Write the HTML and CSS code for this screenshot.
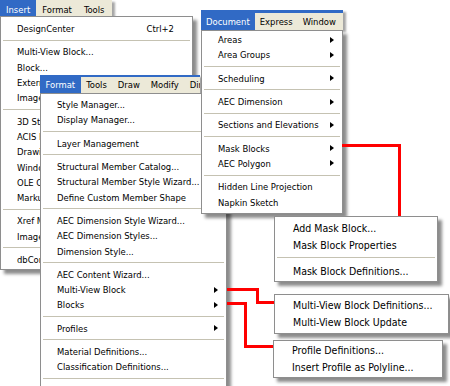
FILE: index.html
```html
<!DOCTYPE html>
<html>
  <head>
    <title>Menus</title>
    <link rel="stylesheet" href="styles.css">
  </head>
  <body>
    <div class="canvas">
      <!-- Insert menu -->
      <div class="menu insert">
        <div class="bar">
          <span class="top on">Insert</span>
          <span class="top">Format</span>
          <span class="top">Tools</span>
        </div>
        <div class="drop">
          <div class="item">DesignCenter<span class="key">Ctrl+2</span></div>
          <div class="sep"></div>
          <div class="item">Multi-View Block...</div>
          <div class="item">Block...</div>
          <div class="item">External Reference...</div>
          <div class="item">Image...</div>
          <div class="sep"></div>
          <div class="item">3D Studio...</div>
          <div class="item">ACIS File...</div>
          <div class="item">Drawing Exchange Binary...</div>
          <div class="item">Windows Metafile...</div>
          <div class="item">OLE Object...</div>
          <div class="item">Markup...</div>
          <div class="sep"></div>
          <div class="item">Xref Manager...</div>
          <div class="item">Image Manager...</div>
          <div class="sep"></div>
          <div class="item">dbConnect</div>
        </div>
      </div>

      <!-- Format menu -->
      <div class="menu format">
        <div class="bar">
          <span class="top on">Format</span>
          <span class="top">Tools</span>
          <span class="top">Draw</span>
          <span class="top">Modify</span>
          <span class="top">Dimension</span>
        </div>
        <div class="drop">
          <div class="item">Style Manager...</div>
          <div class="item">Display Manager...</div>
          <div class="sep"></div>
          <div class="item">Layer Management</div>
          <div class="sep"></div>
          <div class="item">Structural Member Catalog...</div>
          <div class="item">Structural Member Style Wizard...</div>
          <div class="item">Define Custom Member Shape</div>
          <div class="sep"></div>
          <div class="item">AEC Dimension Style Wizard...</div>
          <div class="item">AEC Dimension Styles...</div>
          <div class="item">Dimension Style...</div>
          <div class="sep"></div>
          <div class="item">AEC Content Wizard...</div>
          <div class="item">Multi-View Block<span class="arrow"></span></div>
          <div class="item">Blocks<span class="arrow"></span></div>
          <div class="sep"></div>
          <div class="item">Profiles<span class="arrow"></span></div>
          <div class="sep"></div>
          <div class="item">Material Definitions...</div>
          <div class="item">Classification Definitions...</div>
          <div class="sep"></div>
          <div class="item">Drawing Setup...</div>
        </div>
      </div>

      <!-- Document menu -->
      <div class="menu document">
        <div class="bar">
          <span class="top on">Document</span>
          <span class="top">Express</span>
          <span class="top">Window</span>
        </div>
        <div class="drop">
          <div class="item">Areas<span class="arrow"></span></div>
          <div class="item">Area Groups<span class="arrow"></span></div>
          <div class="sep"></div>
          <div class="item">Scheduling<span class="arrow"></span></div>
          <div class="sep"></div>
          <div class="item">AEC Dimension<span class="arrow"></span></div>
          <div class="sep"></div>
          <div class="item">Sections and Elevations<span class="arrow"></span></div>
          <div class="sep"></div>
          <div class="item">Mask Blocks<span class="arrow"></span></div>
          <div class="item">AEC Polygon<span class="arrow"></span></div>
          <div class="sep"></div>
          <div class="item">Hidden Line Projection</div>
          <div class="item">Napkin Sketch</div>
        </div>
      </div>

      <!-- submenus -->
      <div class="sub mask">
        <div class="item">Add Mask Block...</div>
        <div class="item">Mask Block Properties</div>
        <div class="sep"></div>
        <div class="item">Mask Block Definitions...</div>
      </div>
      <div class="sub mvb">
        <div class="item">Multi-View Block Definitions...</div>
        <div class="item">Multi-View Block Update</div>
      </div>
      <div class="sub profile">
        <div class="item">Profile Definitions...</div>
        <div class="item">Insert Profile as Polyline...</div>
      </div>

      <svg class="links" width="450" height="386" viewBox="0 0 450 386">
        <path d="M342 145.5 H399.5 V216" />
        <path d="M227 289.5 H257.5 V302.5 H274" />
        <path d="M227 303.5 H245.5 V346.5 H273" />
      </svg>
    </div>
  </body>
</html>
```

FILE: styles.css
```css
body {
  margin: 0;
  background: #fff;
  font-family: "DejaVu Sans Condensed", "Liberation Sans", sans-serif;
  font-size: 9.4px;
  color: #000;
}
.canvas {
  position: relative;
  width: 450px;
  height: 386px;
  overflow: hidden;
}

/* each menu is a cut-out screenshot placed on the canvas */
.menu {
  position: absolute;
  display: flex;
  flex-direction: column;
  align-items: flex-start;
}
.insert {
  left: 0;
  top: 0;
  z-index: 1;
}
.format {
  left: 40px;
  top: 75px;
  z-index: 2;
}
.document {
  left: 201px;
  top: 10px;
  z-index: 3;
}

.bar {
  display: flex;
  box-sizing: border-box;
  background: #ece9d8;
  white-space: nowrap;
  overflow: hidden;
  box-shadow: 3px 2px 2px rgba(0, 0, 0, 0.35);
}
.top {
  padding: 0 5px;
}
.top.on {
  background: #316ac5;
  color: #fff;
}
.insert .bar {
  width: 112px;
  height: 16px;
}
.insert .top {
  padding: 3px 6px 0;
  line-height: 13px;
}
.format .bar {
  width: 160px;
  height: 18px;
  border-top: 2px solid #316ac5;
  line-height: 16px;
}
.format .top {
  padding: 0 5.5px;
}
.document .bar {
  width: 142px;
  height: 20px;
  border-top: 3px solid #316ac5;
  line-height: 17px;
}

.drop {
  box-sizing: border-box;
  background: #fff;
  border: 1px solid #8e8e8e;
  box-shadow: 4px 4px 3px rgba(0, 0, 0, 0.45);
}
.insert .drop {
  width: 193px;
  height: 254px;
  padding-top: 4px;
}
.format .drop {
  width: 187px;
  height: 320px;
  padding-top: 3px;
}
.document .drop {
  width: 142px;
  padding: 1px 0 3px;
}

.item {
  display: flex;
  align-items: center;
  height: 15.3px;
  padding: 0 8px 0 16px;
  white-space: nowrap;
}
.key {
  margin-left: auto;
  margin-right: 10px;
}
.arrow {
  margin-left: auto;
  border-left: 4px solid #000;
  border-top: 3.5px solid transparent;
  border-bottom: 3.5px solid transparent;
}
.sep {
  height: 1px;
  margin: 3.5px 2px;
  background: #c5c2b2;
}

.sub {
  position: absolute;
  z-index: 4;
  box-sizing: border-box;
  background: #fff;
  border: 1px solid #8e8e8e;
  box-shadow: 4px 4px 3px rgba(0, 0, 0, 0.45);
  font-size: 10.5px;
}
.sub .item {
  height: 17px;
  padding-left: 18px;
}
.sub .sep {
  margin: 4px 2px;
}
.mask {
  left: 274px;
  top: 216px;
  width: 164px;
  padding: 2px 0;
}
.mvb {
  left: 274px;
  top: 294px;
  width: 175px;
  padding: 1px 0 3px;
}
.profile {
  left: 273px;
  top: 340px;
  width: 170px;
  padding: 0 0 2px;
}

.links {
  position: absolute;
  left: 0;
  top: 0;
  z-index: 5;
  pointer-events: none;
}
.links path {
  fill: none;
  stroke: #f00;
  stroke-width: 3;
}
```
